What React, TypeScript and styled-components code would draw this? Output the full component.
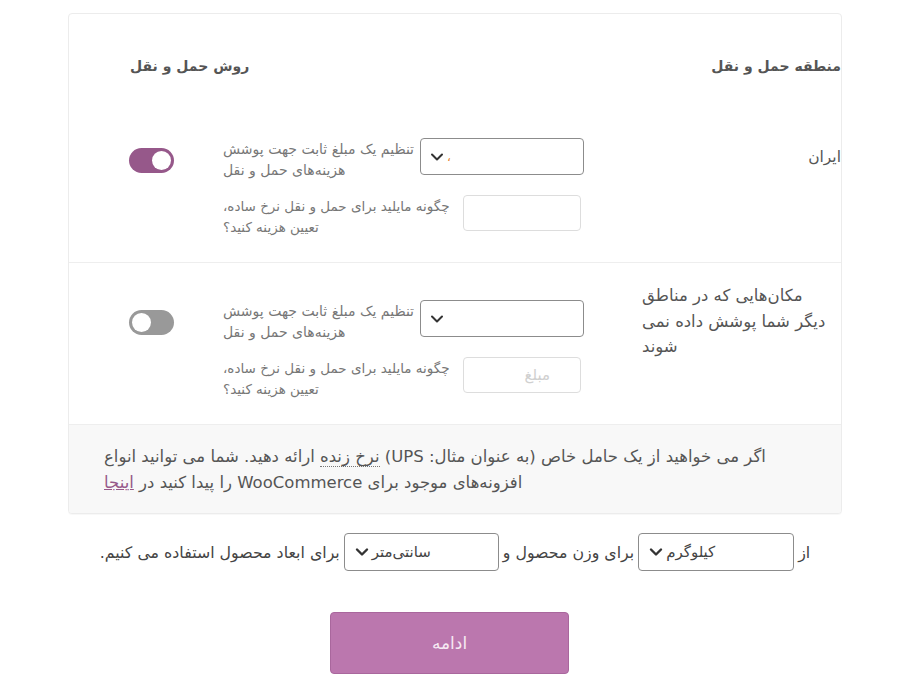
import React from "react";
import styled, { createGlobalStyle } from "styled-components";

const Global = createGlobalStyle`
  html, body { margin: 0; padding: 0; background: #fff; }
  body { font-family: "DejaVu Sans", "Noto Sans", sans-serif; color: #555; }
  * { box-sizing: border-box; }
`;

const Page = styled.div`
  direction: rtl;
  width: 910px;
  padding-top: 13px;
  display: flex;
  flex-direction: column;
  align-items: center;
`;

const Card = styled.div`
  width: 774px;
  border: 1px solid #ececec;
  border-radius: 4px;
  background: #fff;
  box-shadow: 0 1px 1px rgba(0, 0, 0, 0.03);
  overflow: hidden;
`;

const HeaderRow = styled.div`
  display: grid;
  grid-template-columns: 257px 1fr;
  height: 87px;
  align-items: center;
  padding-top: 17px;
`;

const HeadCell = styled.div<{ $left?: boolean }>`
  font-size: 14px;
  font-weight: bold;
  color: #555;
  text-align: ${(p) => (p.$left ? "left" : "right")};
  padding-left: ${(p) => (p.$left ? "61px" : "0")};
`;

const Row = styled.div`
  display: grid;
  grid-template-columns: 257px 361px 1fr;
  align-items: start;
  padding: 37px 0 31px;
  border-bottom: 1px solid #eee;
`;

const Region = styled.div<{ $offset: number; $wide?: boolean }>`
  margin-top: ${(p) => p.$offset}px;
  font-size: ${(p) => (p.$wide ? "16.5px" : "15.5px")};
  line-height: 25.5px;
  color: #555;
  text-align: ${(p) => (p.$wide ? "left" : "right")};
  padding: ${(p) => (p.$wide ? "0 8px 0 58px" : "0")};
`;

const Method = styled.div`
  display: flex;
  flex-direction: column;
  gap: 20px;
`;

const SubRow = styled.div<{ $h: number; $inset?: number; $gap?: number }>`
  display: flex;
  align-items: flex-start;
  height: ${(p) => p.$h}px;
  padding-right: ${(p) => p.$inset ?? 0}px;
  gap: ${(p) => p.$gap ?? 0}px;
`;

const SelectBox = styled.div<{ $w: number; $h: number; $pad: number }>`
  flex: none;
  width: ${(p) => p.$w}px;
  height: ${(p) => p.$h}px;
  border: 1px solid #8c8c8c;
  border-radius: 4px;
  background: #fff;
  display: flex;
  align-items: center;
  justify-content: flex-end;
  padding-left: ${(p) => p.$pad}px;
  gap: 3px;
`;

const SelectValue = styled.span<{ $accent?: boolean }>`
  font-size: ${(p) => (p.$accent ? "12px" : "15px")};
  color: ${(p) => (p.$accent ? "#e5832a" : "#444")};
  line-height: 1;
`;

const Label = styled.div<{ $size: number }>`
  flex: 1;
  font-size: ${(p) => p.$size}px;
  line-height: 21px;
  margin-top: 1px;
  color: #777;
  text-align: left;
`;

const Input = styled.div`
  flex: none;
  width: 118px;
  height: 36px;
  border: 1px solid #ddd;
  border-radius: 4px;
  background: #fff;
  display: flex;
  align-items: center;
  padding-right: 30px;
  font-size: 15px;
  color: #d0d0d0;
`;

const ToggleCell = styled.div`
  display: flex;
  justify-content: flex-end;
  padding-left: 60px;
  padding-top: 10px;
`;

const Toggle = styled.div<{ $on: boolean }>`
  direction: ltr;
  width: 45px;
  height: 25px;
  border-radius: 13px;
  background: ${(p) => (p.$on ? "#96588a" : "#999")};
  display: flex;
  align-items: center;
  justify-content: ${(p) => (p.$on ? "flex-end" : "flex-start")};
  padding: 0 3px;
`;

const Knob = styled.div`
  width: 19px;
  height: 19px;
  border-radius: 50%;
  background: #fff;
`;

const Notice = styled.div`
  background: #f8f8f8;
  padding: 19px 50px 17px 35px;
  font-size: 16.5px;
  line-height: 26px;
  color: #555;
  text-align: left;
`;

const Abbr = styled.span`
  border-bottom: 1px dotted #777;
`;

const Link = styled.a`
  color: #96588a;
  text-decoration: underline;
`;

const UnitRow = styled.div`
  margin-top: 19px;
  display: flex;
  align-items: center;
  gap: 4px;
  font-size: 15.8px;
  color: #444;
`;

const ButtonWrap = styled.div`
  margin-top: 41px;
  padding-right: 11px;
  display: flex;
  justify-content: center;
  width: 100%;
`;

const Button = styled.button`
  width: 239px;
  height: 62px;
  border: 1px solid #a9679d;
  border-radius: 4px;
  background: #bb77ae;
  color: #f6e9f3;
  font-family: "DejaVu Sans", sans-serif;
  font-size: 17px;
  cursor: pointer;
`;

const Chevron: React.FC<{ bold?: boolean }> = ({ bold }) => (
  <svg width="14" height="14" viewBox="0 0 14 14" style={{ flex: "none" }}>
    <polyline
      points="2,4.5 7,9.5 12,4.5"
      fill="none"
      stroke="#333"
      strokeWidth={bold ? 2.4 : 2}
      strokeLinecap="round"
      strokeLinejoin="round"
    />
  </svg>
);

type ZoneProps = {
  name: string;
  wide?: boolean;
  offset: number;
  on: boolean;
  accent?: boolean;
  placeholder?: string;
};

const Zone: React.FC<ZoneProps> = ({ name, wide, offset, on, accent, placeholder }) => (
  <Row>
    <Region $offset={offset} $wide={wide}>
      {name}
    </Region>
    <Method>
      <SubRow $h={37}>
        <SelectBox $w={164} $h={37} $pad={9}>
          {accent && <SelectValue $accent>،</SelectValue>}
          <Chevron />
        </SelectBox>
        <Label $size={14}>تنظیم یک مبلغ ثابت جهت پوشش هزینه‌های حمل و نقل</Label>
      </SubRow>
      <SubRow $h={36} $inset={3} $gap={9}>
        <Input>{placeholder}</Input>
        <Label $size={13.5}>چگونه مایلید برای حمل و نقل نرخ ساده، تعیین هزینه کنید؟</Label>
      </SubRow>
    </Method>
    <ToggleCell>
      <Toggle $on={on}>
        <Knob />
      </Toggle>
    </ToggleCell>
  </Row>
);

export default function App() {
  return (
    <>
      <Global />
      <Page>
        <Card>
          <HeaderRow>
            <HeadCell>منطقه حمل و نقل</HeadCell>
            <HeadCell $left>روش حمل و نقل</HeadCell>
          </HeaderRow>
          <Zone name="ایران" offset={7} on accent />
          <Zone
            name="مکان‌هایی که در مناطق دیگر شما پوشش داده نمی شوند"
            wide
            offset={-17}
            on={false}
            placeholder="مبلغ"
          />
          <Notice>
            اگر می خواهید از یک حامل خاص (به عنوان مثال: UPS) <Abbr>نرخ زنده</Abbr> ارائه
            دهید. شما می توانید انواع افزونه‌های موجود برای WooCommerce را پیدا کنید در{" "}
            <Link href="#">اینجا</Link>
          </Notice>
        </Card>
        <UnitRow>
          <span>از</span>
          <SelectBox $w={156} $h={38} $pad={10}>
            <SelectValue>کیلوگرم</SelectValue>
            <Chevron bold />
          </SelectBox>
          <span>برای وزن محصول و</span>
          <SelectBox $w={155} $h={38} $pad={10}>
            <SelectValue>سانتی‌متر</SelectValue>
            <Chevron bold />
          </SelectBox>
          <span>برای ابعاد محصول استفاده می کنیم.</span>
        </UnitRow>
        <ButtonWrap>
          <Button>ادامه</Button>
        </ButtonWrap>
      </Page>
    </>
  );
}
